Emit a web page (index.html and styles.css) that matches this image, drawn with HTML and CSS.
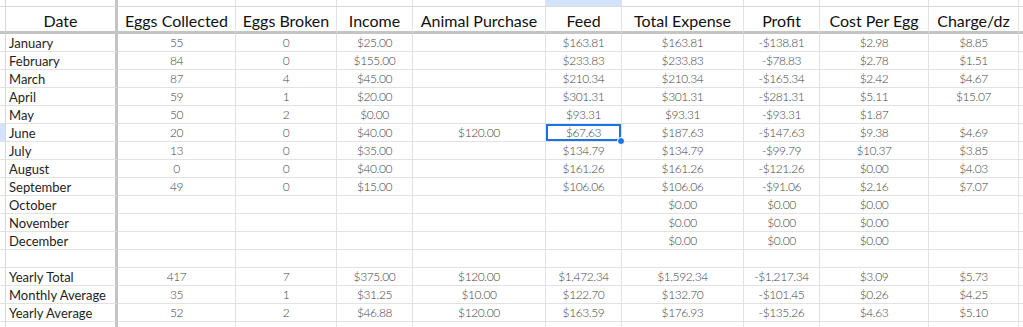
FILE: index.html
```html
<!DOCTYPE html>
<html>
<head>
<meta charset="utf-8">
<link rel="stylesheet" href="styles.css">
</head>
<body>
<div class="sheet">
  <div class="c top rh"></div><div class="c top thick"></div><div class="c top"></div><div class="c top"></div><div class="c top"></div><div class="c top"></div><div class="c top colsel"></div><div class="c top"></div><div class="c top"></div><div class="c top"></div><div class="c top"></div><div class="c top end"></div>

  <div class="c hd rh"></div><div class="c hd thick">Date</div><div class="c hd">Eggs Collected</div><div class="c hd">Eggs Broken</div><div class="c hd">Income</div><div class="c hd">Animal Purchase</div><div class="c hd">Feed</div><div class="c hd">Total Expense</div><div class="c hd">Profit</div><div class="c hd">Cost Per Egg</div><div class="c hd">Charge/dz</div><div class="c hd end"></div>

  <div class="c rh"></div><div class="c lbl thick">January</div><div class="c n">55</div><div class="c n">0</div><div class="c n">$25.00</div><div class="c n"></div><div class="c n">$163.81</div><div class="c n">$163.81</div><div class="c n">-$138.81</div><div class="c n">$2.98</div><div class="c n">$8.85</div><div class="c end"></div>
  <div class="c rh"></div><div class="c lbl thick">February</div><div class="c n">84</div><div class="c n">0</div><div class="c n">$155.00</div><div class="c n"></div><div class="c n">$233.83</div><div class="c n">$233.83</div><div class="c n">-$78.83</div><div class="c n">$2.78</div><div class="c n">$1.51</div><div class="c end"></div>
  <div class="c rh"></div><div class="c lbl thick">March</div><div class="c n">87</div><div class="c n">4</div><div class="c n">$45.00</div><div class="c n"></div><div class="c n">$210.34</div><div class="c n">$210.34</div><div class="c n">-$165.34</div><div class="c n">$2.42</div><div class="c n">$4.67</div><div class="c end"></div>
  <div class="c rh"></div><div class="c lbl thick">April</div><div class="c n">59</div><div class="c n">1</div><div class="c n">$20.00</div><div class="c n"></div><div class="c n">$301.31</div><div class="c n">$301.31</div><div class="c n">-$281.31</div><div class="c n">$5.11</div><div class="c n">$15.07</div><div class="c end"></div>
  <div class="c rh"></div><div class="c lbl thick">May</div><div class="c n">50</div><div class="c n">2</div><div class="c n">$0.00</div><div class="c n"></div><div class="c n">$93.31</div><div class="c n">$93.31</div><div class="c n">-$93.31</div><div class="c n">$1.87</div><div class="c n"></div><div class="c end"></div>
  <div class="c rh rowsel"></div><div class="c lbl thick">June</div><div class="c n">20</div><div class="c n">0</div><div class="c n">$40.00</div><div class="c n">$120.00</div><div class="c n sel">$67.63</div><div class="c n">$187.63</div><div class="c n">-$147.63</div><div class="c n">$9.38</div><div class="c n">$4.69</div><div class="c end"></div>
  <div class="c rh"></div><div class="c lbl thick">July</div><div class="c n">13</div><div class="c n">0</div><div class="c n">$35.00</div><div class="c n"></div><div class="c n">$134.79</div><div class="c n">$134.79</div><div class="c n">-$99.79</div><div class="c n">$10.37</div><div class="c n">$3.85</div><div class="c end"></div>
  <div class="c rh"></div><div class="c lbl thick">August</div><div class="c n">0</div><div class="c n">0</div><div class="c n">$40.00</div><div class="c n"></div><div class="c n">$161.26</div><div class="c n">$161.26</div><div class="c n">-$121.26</div><div class="c n">$0.00</div><div class="c n">$4.03</div><div class="c end"></div>
  <div class="c rh"></div><div class="c lbl thick">September</div><div class="c n">49</div><div class="c n">0</div><div class="c n">$15.00</div><div class="c n"></div><div class="c n">$106.06</div><div class="c n">$106.06</div><div class="c n">-$91.06</div><div class="c n">$2.16</div><div class="c n">$7.07</div><div class="c end"></div>
  <div class="c rh"></div><div class="c lbl thick">October</div><div class="c n"></div><div class="c n"></div><div class="c n"></div><div class="c n"></div><div class="c n"></div><div class="c n">$0.00</div><div class="c n">$0.00</div><div class="c n">$0.00</div><div class="c n"></div><div class="c end"></div>
  <div class="c rh"></div><div class="c lbl thick">November</div><div class="c n"></div><div class="c n"></div><div class="c n"></div><div class="c n"></div><div class="c n"></div><div class="c n">$0.00</div><div class="c n">$0.00</div><div class="c n">$0.00</div><div class="c n"></div><div class="c end"></div>
  <div class="c rh"></div><div class="c lbl thick">December</div><div class="c n"></div><div class="c n"></div><div class="c n"></div><div class="c n"></div><div class="c n"></div><div class="c n">$0.00</div><div class="c n">$0.00</div><div class="c n">$0.00</div><div class="c n"></div><div class="c end"></div>
  <div class="c rh"></div><div class="c lbl thick"></div><div class="c n"></div><div class="c n"></div><div class="c n"></div><div class="c n"></div><div class="c n"></div><div class="c n"></div><div class="c n"></div><div class="c n"></div><div class="c n"></div><div class="c end"></div>
  <div class="c rh"></div><div class="c lbl thick">Yearly Total</div><div class="c n">417</div><div class="c n">7</div><div class="c n">$375.00</div><div class="c n">$120.00</div><div class="c n">$1,472.34</div><div class="c n">$1,592.34</div><div class="c n">-$1,217.34</div><div class="c n">$3.09</div><div class="c n">$5.73</div><div class="c end"></div>
  <div class="c rh"></div><div class="c lbl thick">Monthly Average</div><div class="c n">35</div><div class="c n">1</div><div class="c n">$31.25</div><div class="c n">$10.00</div><div class="c n">$122.70</div><div class="c n">$132.70</div><div class="c n">-$101.45</div><div class="c n">$0.26</div><div class="c n">$4.25</div><div class="c end"></div>
  <div class="c rh"></div><div class="c lbl thick">Yearly Average</div><div class="c n">52</div><div class="c n">2</div><div class="c n">$46.88</div><div class="c n">$120.00</div><div class="c n">$163.59</div><div class="c n">$176.93</div><div class="c n">-$135.26</div><div class="c n">$4.63</div><div class="c n">$5.10</div><div class="c end"></div>
  <div class="c rh"></div><div class="c thick"></div><div class="c"></div><div class="c"></div><div class="c"></div><div class="c"></div><div class="c"></div><div class="c"></div><div class="c"></div><div class="c"></div><div class="c"></div><div class="c end"></div>
</div>
</body>
</html>
```

FILE: styles.css
```css
html, body {
  margin: 0;
  padding: 0;
  background: #ffffff;
  overflow: hidden;
}

.sheet {
  display: grid;
  grid-template-columns: 6px 112px 118px 101px 76px 133px 76px 122px 76px 109px 90px 1fr;
  grid-template-rows: 7px 27px repeat(16, 18px) 20px;
  width: 1023px;
  height: 327px;
  overflow: hidden;
}

.c {
  box-sizing: border-box;
  border-right: 1px solid #e2e2e2;
  border-bottom: 1px solid #e2e2e2;
  display: flex;
  align-items: center;
  justify-content: center;
  white-space: nowrap;
  overflow: visible;
  min-width: 0;
}

.c.end {
  border-right: none;
}

.c.thick {
  border-right: 3px solid #c4c4c4;
}

.top {
  background: #ffffff;
  border-bottom-color: #dadada;
}

.colsel {
  background: #d3e3fd;
}

.rh {
  background: #ffffff;
  border-right-color: #d6d6d6;
}

.rowsel {
  background: #d3e3fd;
}

.hd {
  border-bottom: 3px solid #c4c4c4;
  font-family: "Lato", "Open Sans", sans-serif;
  font-size: 16px;
  color: #111111;
  padding-top: 2px;
}

.lbl {
  justify-content: flex-start;
  padding-left: 3px;
  font-family: "Lato", "Open Sans", sans-serif;
  font-size: 13px;
  color: #1e1e1e;
}

.n {
  font-family: "Lato", sans-serif;
  font-weight: 300;
  font-size: 12px;
  letter-spacing: -0.4px;
  color: #444444;
}

.sel {
  position: relative;
  box-shadow: inset 0 0 0 2px #1a73e8;
}

.sel::after {
  content: "";
  position: absolute;
  right: -4px;
  bottom: -4px;
  width: 6px;
  height: 6px;
  border-radius: 50%;
  background: #1a73e8;
  border: 1px solid #ffffff;
  z-index: 2;
}
```
